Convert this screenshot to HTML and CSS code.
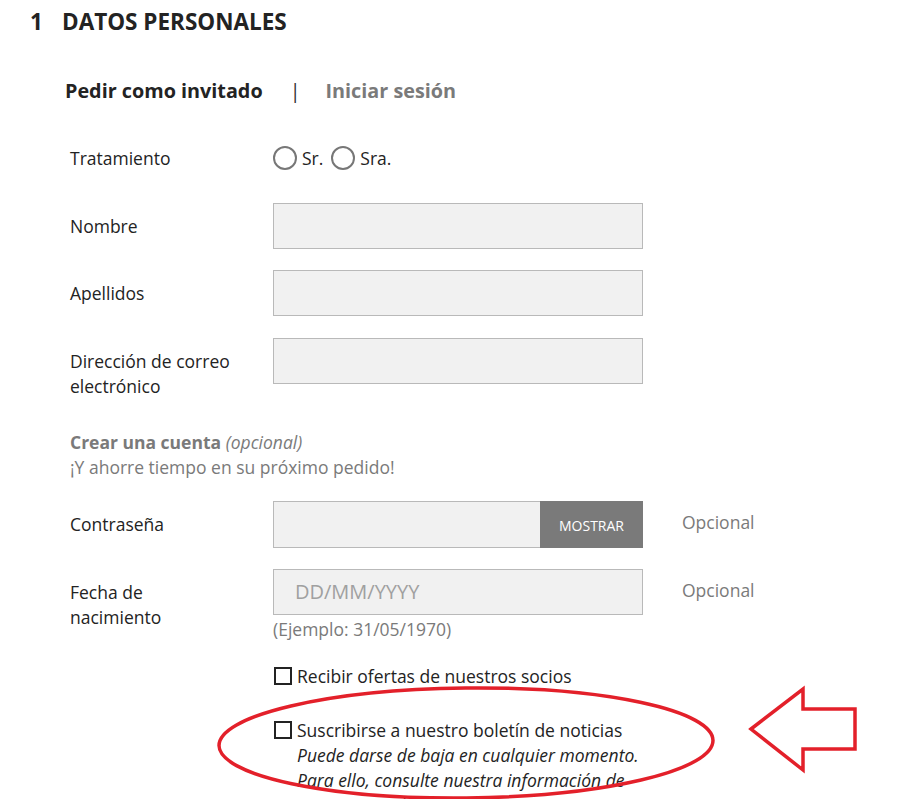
FILE: index.html
```html
<!DOCTYPE html>
<html lang="es">
<head>
<meta charset="utf-8">
<title>Datos personales</title>
<link rel="stylesheet" href="styles.css">
</head>
<body>
<main class="page">
  <h1 class="step"><span class="step-num">1</span>DATOS PERSONALES</h1>
  <nav class="tabs">
    <span class="tab tab-active">Pedir como invitado</span>
    <span class="tab-sep">|</span>
    <span class="tab tab-link">Iniciar sesión</span>
  </nav>

  <form class="form">
    <div class="row">
      <span class="lbl">Tratamiento</span>
      <div class="radios">
        <label class="radio"><span class="radio-dot"></span>Sr.</label>
        <label class="radio"><span class="radio-dot"></span>Sra.</label>
      </div>
    </div>
    <div class="row">
      <span class="lbl">Nombre</span>
      <div class="input"></div>
    </div>
    <div class="row">
      <span class="lbl">Apellidos</span>
      <div class="input"></div>
    </div>
    <div class="row">
      <span class="lbl">Dirección de correo electrónico</span>
      <div class="input"></div>
    </div>

    <div class="account">
      <div class="account-title"><b>Crear una cuenta</b> <i>(opcional)</i></div>
      <div class="account-sub">¡Y ahorre tiempo en su próximo pedido!</div>
    </div>

    <div class="row">
      <span class="lbl">Contraseña</span>
      <div class="input input-pass"><span class="show-btn">MOSTRAR</span></div>
      <span class="opt">Opcional</span>
    </div>
    <div class="row row-date">
      <span class="lbl">Fecha de nacimiento</span>
      <div class="date-col">
        <div class="input"><span class="placeholder">DD/MM/YYYY</span></div>
        <div class="hint">(Ejemplo: 31/05/1970)</div>
      </div>
      <span class="opt">Opcional</span>
    </div>

    <div class="check check-first">
      <span class="box"></span>
      <div class="check-text">Recibir ofertas de nuestros socios</div>
    </div>
    <div class="check check-second">
      <span class="box"></span>
      <div class="check-text">Suscribirse a nuestro boletín de noticias
        <em class="check-note">Puede darse de baja en cualquier momento. Para ello, consulte nuestra información de contacto en el aviso legal.</em>
      </div>
    </div>
  </form>

  <svg class="annot" width="899" height="799" viewBox="0 0 899 799" aria-hidden="true">
    <ellipse cx="466" cy="743" rx="247" ry="55" fill="none" stroke="#e3202a" stroke-width="3.5" transform="rotate(-0.6 466 743)"/>
    <path d="M751 729 L803 689 L803 709 L855 709 L855 749 L803 749 L803 770 Z" fill="none" stroke="#e3202a" stroke-width="3.5" stroke-linejoin="miter"/>
  </svg>
</main>
</body>
</html>
```

FILE: styles.css
```css
html, body {
  margin: 0;
  padding: 0;
  background: #fff;
}

body {
  font-family: "Open Sans", "Liberation Sans", sans-serif;
  color: #232323;
  overflow: hidden;
}

.page {
  position: relative;
  width: 899px;
  height: 799px;
  overflow: hidden;
}

.step {
  margin: 0;
  padding: 7px 0 0 30px;
  font-size: 22.5px;
  line-height: 30px;
  font-weight: 700;
  color: #232323;
}

.step-num {
  display: inline-block;
  width: 32px;
}

.tabs {
  display: flex;
  align-items: center;
  margin: 41px 0 0 65px;
  font-size: 19.8px;
  line-height: 26px;
  font-weight: 700;
}

.tab-active {
  color: #232323;
}

.tab-sep {
  margin: 0 25px 0 27px;
  font-weight: 400;
  color: #333;
}

.tab-link {
  color: #7a7a7a;
}

.form {
  margin: 31px 0 0 70px;
  font-size: 17.5px;
  line-height: 25px;
}

.row {
  display: grid;
  grid-template-columns: 203px 370px auto;
  align-items: start;
  margin-bottom: 21.5px;
}

.lbl {
  padding-top: 11px;
  max-width: 162px;
}

.radios {
  display: flex;
  align-items: center;
  height: 46px;
  gap: 8px;
}

.radio {
  display: flex;
  align-items: center;
  gap: 5px;
}

.radio-dot {
  width: 20px;
  height: 20px;
  border: 2px solid #777;
  border-radius: 50%;
}

.input {
  position: relative;
  box-sizing: border-box;
  height: 46px;
  background: #f1f1f1;
  border: 1px solid #b9b9b9;
}

.input-pass {
  display: flex;
  justify-content: flex-end;
  height: 47px;
}

.show-btn {
  display: flex;
  align-items: center;
  justify-content: center;
  width: 103px;
  margin: -1px -1px -1px 0;
  padding-top: 3px;
  background: #7a7a7a;
  color: #fff;
  font-size: 14px;
}

.placeholder {
  display: block;
  padding: 9px 0 0 21px;
  font-size: 20px;
  color: #a0a0a0;
}

.hint {
  color: #7a7a7a;
  margin-top: 2px;
}

.opt {
  margin-left: 39px;
  padding-top: 9px;
  color: #7a7a7a;
}

.account {
  margin: 31px 0 21px 0;
  color: #7a7a7a;
}

.account-title b {
  font-weight: 700;
}

.row-date {
  margin-top: 0;
}

.check {
  display: flex;
  align-items: flex-start;
  margin-left: 204px;
}

.check-first {
  margin-top: 20px;
}

.check-second {
  margin-top: 29px;
}

.box {
  flex: none;
  box-sizing: border-box;
  width: 18px;
  height: 18px;
  margin-top: 3px;
  margin-right: 5px;
  border: 2px solid #232323;
}

.check-text {
  width: 370px;
}

.check-note {
  display: block;
  font-style: italic;
}

.annot {
  position: absolute;
  left: 0;
  top: 0;
  pointer-events: none;
}
```
